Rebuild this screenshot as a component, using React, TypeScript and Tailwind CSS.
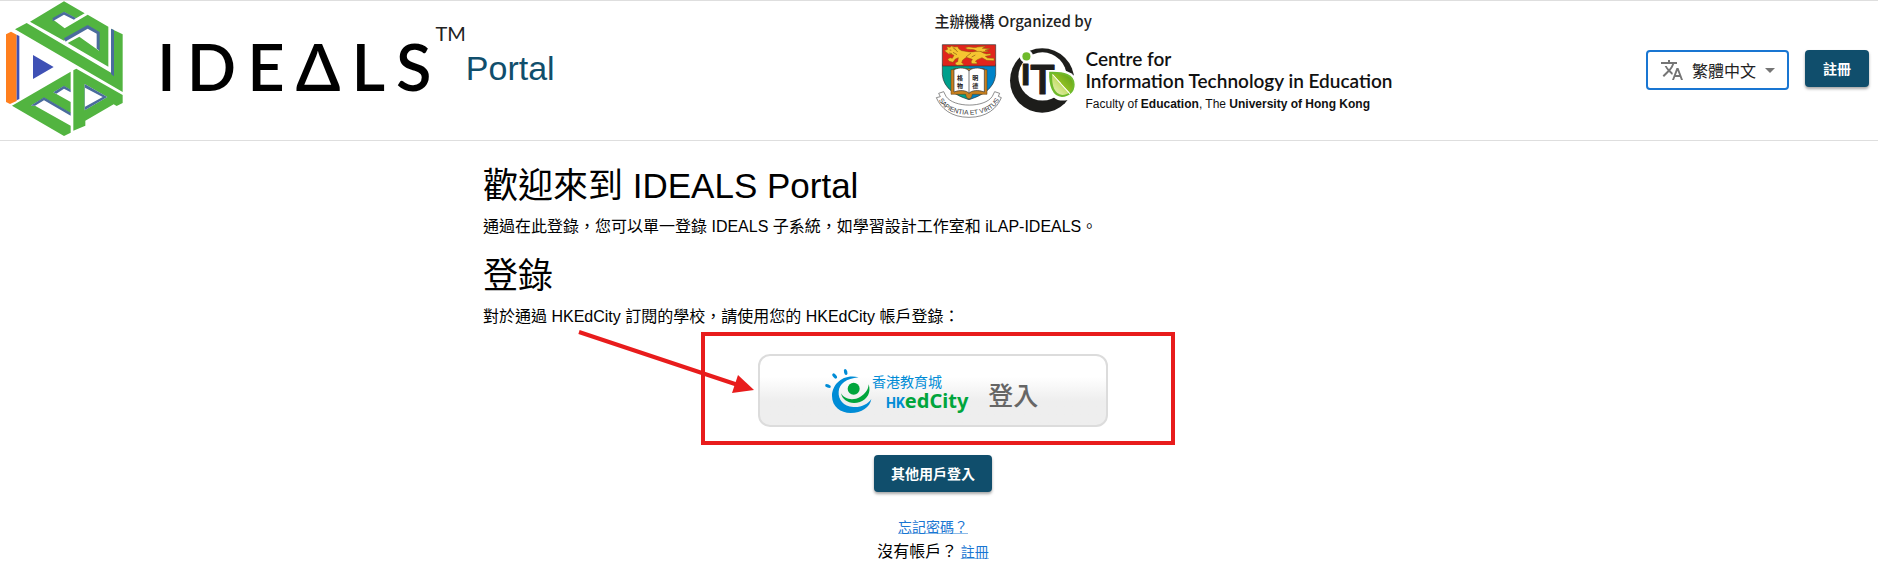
import { useState } from "react";

const SANS = "font-['Liberation_Sans','Noto_Sans_CJK_TC',sans-serif]";
const CJK = "font-['Noto_Sans_CJK_TC',sans-serif]";

function IdealsMark() {
  return (
    <svg viewBox="0 3 390 411" className="h-[137px] w-[130px] shrink-0" role="img" aria-label="IDEALS">
      <g fill="#52b440">
        <path d="M90 65 192 4 254 40 228 55 192 36 158 58 194 85 263 44 325 80V200L203 129 238 110 297 152V97L263 77 192 122Z" />
        <path d="M45 88 80 69 333 218V86L368 103V276Z" />
        <path d="M36 317 212 215V270L192 258 160 277 212 306V340L132 293 92 317H105L212 377V398L192 408Z" />
        <path
          fillRule="evenodd"
          d="M220 211 229 206 368 285V309L350 318 341 313 256 362V377L220 392ZM254 252V331L322 291Z"
        />
      </g>
      <g fill="#4a6c9c">
        <path d="M158 54 192 35 228 54 222 59 192 44 158 64Z" />
        <path d="M192 115 263 75 299 96V152L290 146V101L263 86 203 121 197 125Z" />
        <path d="M333 86 342 90V229L333 222Z" />
        <path d="M160 277 192 257 212 269V277L192 266 169 281Z" />
        <path d="M92 317 132 292 212 338V347L132 301 105 317Z" />
        <path fillRule="evenodd" d="M254 252 322 291 254 331ZM255 263V320L308 291Z" />
      </g>
      <path fill="#ff7f1e" d="M18 103 33 95 50 104V303L30 312 18 306Z" />
      <path fill="#3f51b5" d="M50 104 58 108V297L50 301ZM99 165 161 201 99 237Z" />
    </svg>
  );
}

function Crest() {
  return (
    <svg viewBox="42 130 204 228" className="h-[76px] w-[68px] shrink-0" role="img" aria-label="HKU">
      <path fill="#00a08c" d="M64 192H144V300C106 288 68 268 64 225Z" />
      <path fill="#0083c8" d="M144 192H224V225C220 268 182 288 144 300Z" />
      <path fill="#e1251b" d="M64 135H224V199H64Z" />
      {/* lion */}
      <g fill="#f6c431" stroke="#8a5a10" strokeWidth="1.5" strokeLinejoin="round">
        <path d="M70 153l10-4-3-8 10 2 5-4 8 3 10-1 4 7 8 5c10 1 25 6 38 3l16-3 11 7 9 3 13-1v5l-16 3 7 5 19 1v7l-22-1-14-8-14 6-6 5 5 3v4h-15l-3-5 4-8-18-6-11 8-3 8 5 3v4l-18 1-6-3v-5l7-3 2-12-9 4-7 10-11-3-5-6 7-5 7 2 5-9-9-4-6 1Z" />
        <path d="M167 154c-8-8-28-1-34-10 10-6 27 3 36-2l25-2-10 6 24 1-16 5 12 3-20 2c-10-4-14 0-17-3Z" />
      </g>
      <path fill="none" stroke="#8a5a10" strokeWidth="2" d="M86 151l5 1m4-9 8 7m-19 10 9 2m8-16 9 11m-14 1 12 7m42-5-15 12m28-6-11 6" />
      <path fill="none" stroke="#333" strokeWidth="2" d="M64 135H224V225C220 268 182 288 144 300C106 288 68 268 64 225ZM64 199H224" />
      {/* open book */}
      <path fill="#c8801e" stroke="#5b3a12" strokeWidth="1.5" d="M90 210H98V207H190V210H198V284H154C152 302 136 302 134 284H90Z" />
      <path fill="#fff" stroke="#333" strokeWidth="2" d="M99 210C116 202 136 204 144 214 152 204 172 202 190 210V277C170 270 152 272 144 281 136 272 118 270 99 277Z" />
      <path stroke="#333" strokeWidth="2" d="M144 214V281" />
      <g fill="#222" fontSize="18" fontWeight="700" fontFamily="'Noto Sans CJK TC', sans-serif">
        <text x="108" y="240">格</text>
        <text x="108" y="264">物</text>
        <text x="154" y="240">明</text>
        <text x="154" y="264">德</text>
      </g>
      {/* motto ribbon */}
      <path
        fill="#fff"
        stroke="#555"
        strokeWidth="2"
        strokeLinejoin="round"
        d="M53 281 68 276 75 290C98 325 192 325 214 290L221 276 236 281 232 290 241 294C228 326 198 353 144 353S60 326 46 294L58 291Z"
      />
      <defs>
        <path id="motto" d="M52 298C66 330 100 345 144 345S222 330 236 298" />
      </defs>
      <text fill="#333" fontSize="20" fontWeight="500" fontFamily="'Liberation Sans', sans-serif">
        <textPath href="#motto" startOffset="50%" textAnchor="middle">
          SAPIENTIA ET VIRTUS
        </textPath>
      </text>
    </svg>
  );
}

function CiteMark() {
  return (
    <svg viewBox="266 146 200 200" className="h-[67px] w-[67px] shrink-0" role="img" aria-label="CITE">
      <defs>
        <linearGradient id="leaf" x1="0" y1="1" x2="1" y2="0">
          <stop offset="0" stopColor="#e9f3c0" />
          <stop offset="0.5" stopColor="#c3dc64" />
          <stop offset="0.5" stopColor="#8fbf21" />
          <stop offset="1" stopColor="#5a9e1a" />
        </linearGradient>
      </defs>
      <circle cx="365" cy="246" r="96" fill="#1d1d1b" />
      <circle cx="366" cy="234" r="72" fill="#fff" />
      <path fill="#fff" d="M380 208C430 210 470 222 475 262 470 300 440 310 412 304 388 298 376 262 380 208Z" />
      <circle cx="318" cy="174" r="20" fill="#fff" />
      <circle cx="318" cy="174" r="12" fill="#6fba2c" />
      <g fill="#1d1d1b" stroke="#1d1d1b" strokeWidth="3" strokeLinejoin="round" fontFamily="Inter, sans-serif" fontWeight="600" textAnchor="middle">
        <text x="316" y="258" fontSize="112">ı</text>
        <text x="366" y="285" fontSize="120">T</text>
      </g>
      <path
        fill="#6fba2c"
        stroke="#fff"
        strokeWidth="4"
        d="M384 218C430 216 464 224 464 258 464 284 444 297 424 297 394 297 382 262 384 218Z"
      />
      <path fill="url(#leaf)" d="M395 227C430 224 455 232 456 257 456 278 442 289 425 289 402 286 393 262 395 227Z" />
      <path stroke="#fff" strokeWidth="3" d="M396 228 448 286" />
    </svg>
  );
}

function EdCityMark() {
  return (
    <svg viewBox="42 24 144 138" className="h-[46px] w-[48px] shrink-0" aria-hidden="true">
      <g fill="#008cd6">
        <path d="M146 52C100 40 66 72 66 108 66 140 92 159 122 159 155 159 180 142 184 117 174 133 152 143 130 141 100 139 84 118 86 95 88 72 108 56 146 52Z" />
        <ellipse cx="54" cy="78" rx="9" ry="5" transform="rotate(20 54 78)" />
        <ellipse cx="74" cy="48" rx="9" ry="5" transform="rotate(50 74 48)" />
        <ellipse cx="107" cy="36" rx="9" ry="5" transform="rotate(75 107 36)" />
      </g>
      <g fill="#00a53c">
        <circle cx="131" cy="86" r="18" />
        <path d="M93 100C102 118 130 123 150 111 165 102 175 90 176 73 184 98 172 118 150 126 122 135 97 122 93 100Z" />
      </g>
    </svg>
  );
}

function Header() {
  const [lang, setLang] = useState("zh");

  return (
    <header className="grid grid-cols-2 border-y border-[#dedede] pr-[9px] pb-0.5">
      <div className="flex items-start">
        <IdealsMark />
        {/* wordmark */}
        <div className="flex gap-[11px] pl-[27px] font-[Lato] text-[65px] leading-[130px] font-semibold text-black">
          <span>I</span>
          <span>D</span>
          <span>E</span>
          <span>Δ</span>
          <span>L</span>
          <span>S</span>
        </div>
        <span className="pt-5 pl-1 font-[Lato] text-xl leading-6 text-[#222]">TM</span>
        <span className="pt-[46px] text-[34px] leading-[42px] text-[#104e6c]">Portal</span>
      </div>

      <div className="flex justify-between">
        <div className="pt-[10px]">
          <p className={`${CJK} text-[15px] leading-5 font-medium text-[#222]`}>主辦機構 Organized by</p>
          <div className="mt-3 flex items-start gap-1.5">
            <Crest />
            <div className="pt-1">
              <CiteMark />
            </div>
            <div className="pt-[5px] pl-1 font-[Lato] text-[19px] leading-[22px] font-semibold whitespace-nowrap text-[#111]">
              <p>Centre for</p>
              <p>Information Technology in Education</p>
              <p className={`${SANS} pt-1 text-xs leading-4 font-normal`}>
                Faculty of <b>Education</b>, The <b>University of Hong Kong</b>
              </p>
            </div>
          </div>
        </div>

        <div className="flex items-start gap-4 pt-[49px]">
          <label className="relative flex h-10 items-center rounded border-2 border-[#1976d2] pl-3">
            <svg viewBox="0 0 24 24" className="size-6 fill-[#757575]" aria-hidden="true">
              <path d="M12.87 15.07l-2.54-2.51.03-.03c1.74-1.94 2.98-4.17 3.71-6.53H17V4h-7V2H8v2H1v1.99h11.17C11.5 7.92 10.44 9.75 9 11.35 8.07 10.32 7.3 9.19 6.69 8h-2c.73 1.63 1.73 3.17 2.98 4.56l-5.09 5.02L4 19l5-5 3.11 3.11.76-2.04zM18.5 10h-2L12 22h2l1.12-3h4.75L21 22h2l-4.5-12zm-2.62 7l1.62-4.33L19.12 17h-3.24z" />
            </svg>
            <select
              aria-label="語言"
              value={lang}
              onChange={(e) => setLang(e.target.value)}
              className={`${CJK} h-9 w-[103px] appearance-none bg-transparent pl-2 text-base text-[#222] outline-none`}
            >
              <option value="zh">繁體中文</option>
            </select>
            <svg viewBox="0 0 24 24" className="pointer-events-none absolute right-[5px] size-6 fill-[#757575]" aria-hidden="true">
              <path d="M7 10l5 5 5-5z" />
            </svg>
          </label>
          <button
            type="button"
            className={`${CJK} h-[37px] rounded bg-[#104e6c] px-[18px] pb-0.5 text-sm font-bold text-white shadow-[0_2px_3px_rgba(0,0,0,0.35)]`}
          >
            註冊
          </button>
        </div>
      </div>
    </header>
  );
}

export default function App() {
  return (
    <div className={`${SANS} min-h-screen bg-white text-black`} lang="zh-Hant">
      <Header />

      <main className="pt-6 pr-3">
        <div className="mx-auto max-w-[900px]">
          <h1 className="text-[35px] leading-[42px]">歡迎來到 IDEALS Portal</h1>
          <p className="mt-2 text-base leading-6">
            通過在此登錄，您可以單一登錄 IDEALS 子系統，如學習設計工作室和 iLAP-IDEALS。
          </p>
          <h2 className="mt-4 text-[35px] leading-[42px]">登錄</h2>
          <p className="mt-2 text-base leading-6">對於通過 HKEdCity 訂閱的學校，請使用您的 HKEdCity 帳戶登錄：</p>

          <div className="mt-[25px] flex flex-col items-center">
            <div className="relative">
              <button
                type="button"
                className="flex h-[73px] w-[350px] items-center rounded-xl border-2 border-[#dcdcdc] bg-linear-to-b from-white from-30% to-[#eeeeee] to-65% pl-16"
              >
                <EdCityMark />
                <span className="flex flex-col items-start pt-1">
                  <span className={`${CJK} text-sm leading-4 text-[#008cd6]`}>香港教育城</span>
                  <span className="flex items-baseline pt-0.5 pl-[14px] font-bold text-[#00a53c]">
                    <span className="font-[Roboto] text-sm leading-5 text-[#008cd6]">HK</span>
                    <span className="font-['Noto_Sans'] text-xl leading-5">edCity</span>
                  </span>
                </span>
                <span className={`${CJK} pt-2 pl-5 text-[25px] font-medium text-[#666]`}>登入</span>
              </button>

              {/* callout around the HKEdCity login */}
              <div className="pointer-events-none absolute -inset-x-[57px] -top-[22px] h-[113px] w-[474px] border-4 border-[#e81c1c]" />
              <svg viewBox="0 0 180 66" className="pointer-events-none absolute -top-6 right-full h-[66px] w-[180px]" aria-hidden="true">
                <path d="M1 2 160 55" stroke="#e81c1c" strokeWidth="4" />
                <path d="M160 45 176 60 154 63Z" fill="#e81c1c" />
              </svg>
            </div>

            <button
              type="button"
              className={`${CJK} mt-7 h-[37px] rounded bg-[#104e6c] px-[17px] pb-0.5 text-sm font-bold text-white shadow-[0_2px_3px_rgba(0,0,0,0.35)]`}
            >
              其他用戶登入
            </button>

            <p className={`${CJK} mt-[22px] text-sm leading-6`}>
              <a href="#forgot" className="text-[#1976d2] underline decoration-[#1976d2]/50">
                忘記密碼？
              </a>
            </p>
            <p className={`${CJK} text-base leading-6`}>
              沒有帳戶？{" "}
              <a href="#register" className="text-sm text-[#1976d2] underline decoration-[#1976d2]/50">
                註冊
              </a>
            </p>
          </div>
        </div>
      </main>
    </div>
  );
}
